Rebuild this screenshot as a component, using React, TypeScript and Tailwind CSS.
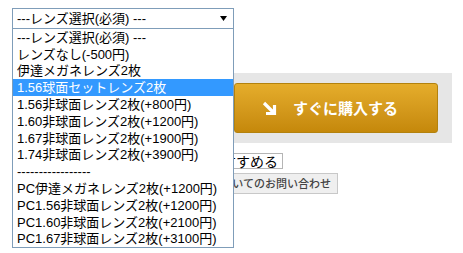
const options = [
  "---レンズ選択(必須) ---",
  "レンズなし(-500円)",
  "伊達メガネレンズ2枚",
  "1.56球面セットレンズ2枚",
  "1.56非球面レンズ2枚(+800円)",
  "1.60非球面レンズ2枚(+1200円)",
  "1.67非球面レンズ2枚(+1900円)",
  "1.74非球面レンズ2枚(+3900円)",
  "-----------------",
  "PC伊達メガネレンズ2枚(+1200円)",
  "PC1.56非球面レンズ2枚(+1200円)",
  "PC1.60非球面レンズ2枚(+2100円)",
  "PC1.67非球面レンズ2枚(+3100円)",
];

const selected = 3;

export default function App() {
  return (
    <div className="relative h-[253px] w-[463px] overflow-hidden bg-white font-['Liberation_Sans','Noto_Sans_CJK_JP',sans-serif] text-[13px] text-black">
      {/* Select box */}
      <div className="pl-3 pt-2">
        <div className="flex h-[21px] w-[222px] items-center justify-between border border-[#7f9db9] bg-white pl-1 pr-[6px] leading-none">
          <span>---レンズ選択(必須) ---</span>
          <svg width="7" height="5" viewBox="0 0 7 5">
            <path d="M0 0 H7 L3.5 5 Z" fill="#000" />
          </svg>
        </div>
      </div>

      {/* Buy panel */}
      <div className="ml-[220px] mt-[44px] h-[70px] w-[232px] bg-[#e6e6e6] pl-[14px] pt-[10px]">
        <button className="flex h-[50px] w-[204px] items-center rounded-[3px] border border-[#b3820e] bg-gradient-to-b from-[#e5ad2b] to-[#c5880a] pl-[27px] text-[15px] font-bold text-white">
          <svg width="15" height="15" viewBox="0 0 15 15" className="mr-[16px]">
            <path d="M2 2 L12 12 M12.5 4 V12.5 H4" stroke="#fff" strokeWidth="3.2" fill="none" />
          </svg>
          <span className="font-['Noto_Sans_CJK_JP',sans-serif]">すぐに購入する</span>
        </button>
      </div>

      {/* Secondary buttons */}
      <div className="ml-[160px] mt-[10px] flex flex-col items-start gap-[4px]">
        <button className="flex h-[16px] w-[123px] items-center justify-end border border-[#b5b5b5] bg-white pr-[4px] text-[14px] leading-none font-['Noto_Sans_CJK_JP',sans-serif]">
          友達におすすめる
        </button>
        <button className="flex h-[21px] w-[178px] items-center justify-end border border-[#c8c8c8] bg-[#efefef] pr-[6px] text-[11px] font-medium leading-none text-[#444] font-['Noto_Sans_CJK_JP',sans-serif]">
          商品についてのお問い合わせ
        </button>
      </div>

      {/* Open dropdown list */}
      <ul className="absolute left-[12px] top-[28px] w-[222px] border border-[#7f9db9] bg-white">
        {options.map((opt, i) => (
          <li
            key={i}
            className={
              i === selected
                ? "flex h-[16.8px] items-center whitespace-nowrap bg-[#3399ff] pl-1 leading-none text-white"
                : "flex h-[16.8px] items-center whitespace-nowrap pl-1 leading-none"
            }
          >
            {opt}
          </li>
        ))}
      </ul>
    </div>
  );
}
